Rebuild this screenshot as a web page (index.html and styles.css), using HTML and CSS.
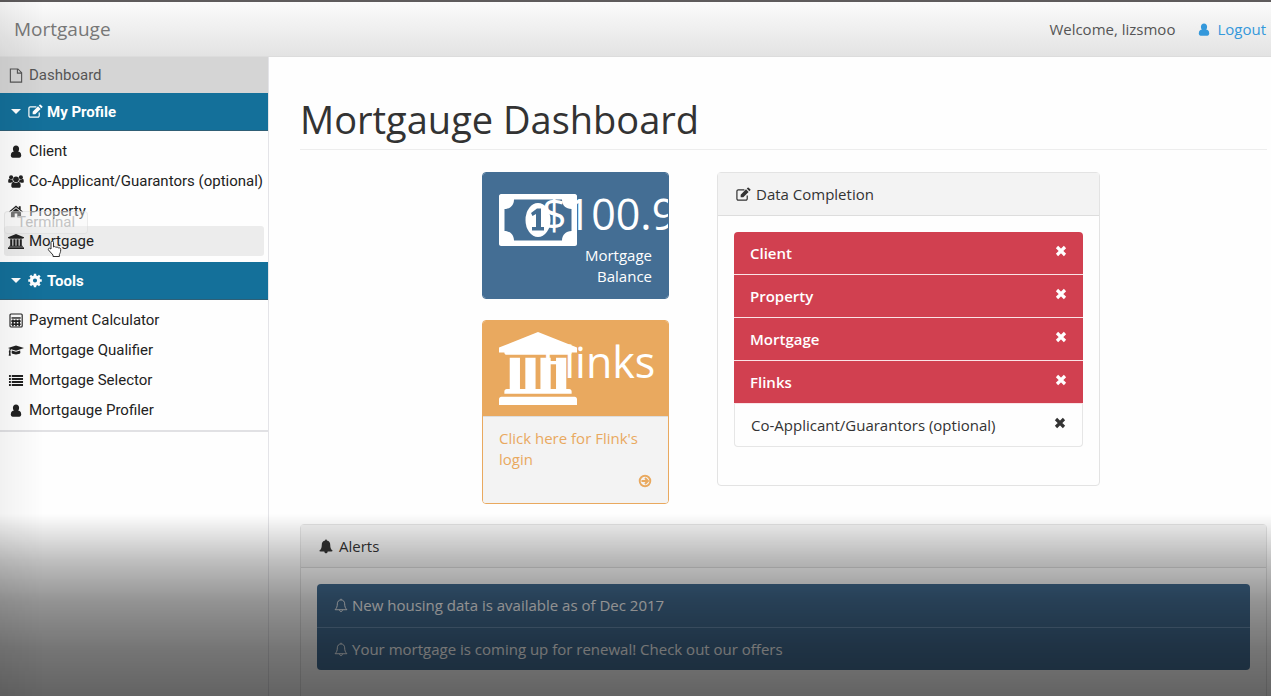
FILE: index.html
```html
<!DOCTYPE html>
<html lang="en">
<head>
<meta charset="UTF-8">
<meta name="viewport" content="width=device-width, initial-scale=1.0">
<title>Mortgauge</title>
<link rel="stylesheet" href="styles.css">
</head>
<body>

<!-- icon set -->
<svg class="icon-defs" aria-hidden="true">
    <symbol id="i-file" viewBox="0 0 16 16"><path d="M2 1h8l4 4v10H2zM9.500 1v4.500h4.500" fill="none" stroke="currentColor" stroke-width="1.200"/></symbol>
    <symbol id="i-edit" viewBox="0 0 16 16"><path d="M12.500 9v3.500a1.500 1.500 0 0 1-1.500 1.500H3a1.500 1.500 0 0 1-1.500-1.500v-8A1.500 1.500 0 0 1 3 3h6.500" fill="none" stroke="currentColor" stroke-width="1.300"/><path d="M5.500 8.200V11h2.800L14 5.300 11.200 2.500zM12 1.700l2.800 2.800 1-1c.4-.4.400-.7 0-1L14 .7c-.3-.4-.7-.4-1 0z" fill="currentColor"/></symbol>
    <symbol id="i-user" viewBox="0 0 16 16"><path d="M8 1.500c2 0 3.300 1.500 3.300 3.500 0 1.500-.5 2.700-1.300 3.400H6C5.200 7.700 4.700 6.500 4.700 5c0-2 1.300-3.500 3.300-3.500z" fill="currentColor"/><path d="M5.500 8C3.500 8.300 2.500 9.800 2.500 12c0 1.700.6 2.600 2 2.600h7c1.400 0 2-.9 2-2.600 0-2.200-1-3.700-3-4z" fill="currentColor"/></symbol>
    <symbol id="i-users" viewBox="0 0 18 16"><g fill="currentColor"><circle cx="9" cy="5.500" r="3.200"/><circle cx="3.500" cy="3.200" r="2.300"/><circle cx="14.500" cy="3.200" r="2.300"/><path d="M5.800 8.300C4.200 9 3.700 11 3.700 13c0 1.300.8 2 1.900 2h6.800c1.100 0 1.900-.7 1.900-2 0-2-.5-4-2.100-4.700-1.700 1.500-4.700 1.500-6.400 0zM.2 8.300c0-1.700.2-3 1.300-3.300 1 .9 2.500 1 3.500.500 0 1.200.2 2 .8 2.700-.9 0-1.700.4-2.200 1.200H1.500C.7 9.400.2 9 .2 8.300zM17.800 8.300c0-1.700-.2-3-1.300-3.300-1 .9-2.500 1-3.500.500 0 1.200-.2 2-.8 2.700.9 0 1.700.4 2.200 1.200h2.100c.8 0 1.300-.4 1.300-1.100z"/></g></symbol>
    <symbol id="i-home" viewBox="0 0 16 16"><g fill="currentColor"><path d="M8 1.700.6 8l.8.900L8 3.400l6.600 5.500.8-.9-2.400-2V2.300h-2v2z"/><path d="M8 4.500 2.600 9v5h4v-3.800h2.800V14h4V9z"/></g></symbol>
    <symbol id="i-bank" viewBox="0 0 16 15"><path d="M8 0l8 3.200v1h-1.100c0 .3-.2.500-.5.500H1.600c-.3 0-.5-.2-.5-.5H0v-1zM2.200 5.300h2.100v6.400h1.100V5.300h2.100v6.400h1V5.300h2.100v6.400h1.100V5.300h2.100v6.400h.6c.3 0 .5.200.5.500v.5H1.100v-.5c0-.3.200-.5.500-.5h.6zM.5 13.300h15c.3 0 .5.200.5.500V15H0v-1.200c0-.3.200-.5.500-.5z" fill="currentColor"/></symbol>
    <symbol id="i-cog" viewBox="0 0 16 16"><circle cx="8" cy="8" r="3.900" fill="none" stroke="currentColor" stroke-width="3.400"/><path d="M8 .8v3M8 12.200v3M.8 8h3M12.200 8h3M2.900 2.900 5 5M11 11l2.100 2.100M2.900 13.100 5 11M11 5l2.100-2.100" stroke="currentColor" stroke-width="2.600"/></symbol>
    <symbol id="i-calc" viewBox="0 0 16 16"><rect x="1.600" y="1.100" width="13" height="13.800" rx="1" fill="none" stroke="currentColor" stroke-width="1.200"/><path d="M3.200 5.300h9.800" stroke="currentColor" stroke-width="1.500"/><path d="M4.700 7v7M8 7v7M11.400 7v7" stroke="currentColor" stroke-width="1.700"/><path d="M3 8.700h10M3 12h10" stroke="currentColor" stroke-width="1.700"/></symbol>
    <symbol id="i-cap" viewBox="0 0 18 16"><path d="M9 2.500 18 5.300 9 8.200 3.500 6.500C2.900 7 2.700 7.800 2.600 8.700c.8.500.7 1.400.1 1.800l.5 3.500H.8l.5-3.500c-.6-.5-.6-1.300 0-1.800 0-1 .3-1.900.9-2.600L0 5.300zM4.300 8l4.700 1.500L13.700 8l.2 2.800c-1.700 2.200-8.100 2.200-9.800 0z" fill="currentColor"/></symbol>
    <symbol id="i-list" viewBox="0 0 16 16"><path d="M.5 3.200h2M3.500 3.200h12M.5 6.400h2M3.500 6.400h12M.5 9.600h2M3.500 9.600h12M.5 12.800h2M3.500 12.800h12" stroke="currentColor" stroke-width="2"/></symbol>
    <symbol id="i-bell" viewBox="0 0 16 16"><path d="M8 .6c.6 0 1 .4.9 1.100C11.400 2.200 12.500 4 12.500 6c0 3.500 1 5 2.500 6.200 0 .6-.5 1-1 1H9.800c0 1-.8 1.900-1.800 1.900s-1.800-.9-1.800-1.900H2c-.5 0-1-.4-1-1C2.500 11 3.500 9.500 3.500 6c0-2 1.100-3.800 3.600-4.300C7 1 7.400.6 8 .6z" fill="currentColor"/></symbol>
    <symbol id="i-bell-o" viewBox="0 0 16 16"><path d="M8 2c-2.600.2-3.900 2-3.900 4.200 0 3-.9 4.800-2.400 6.300h12.600c-1.500-1.500-2.400-3.300-2.400-6.300C11.900 4 10.600 2.200 8 2zM8 2V.8M6.500 12.600c0 2.600 3 2.600 3 0" fill="none" stroke="currentColor"/></symbol>
    <symbol id="i-times" viewBox="0 0 12 12"><path d="M2 2l8 8M10 2l-8 8" stroke="currentColor" stroke-width="3.200"/></symbol>
    <symbol id="i-arrow" viewBox="0 0 14 14"><circle cx="7" cy="7" r="5.300" fill="none" stroke="currentColor" stroke-width="1.900"/><path d="M3.500 7h6M7 4l3 3-3 3" fill="none" stroke="currentColor" stroke-width="1.900"/></symbol>
    <symbol id="i-money" viewBox="0 0 78 52"><path fill="currentColor" fill-rule="evenodd" d="M2 0h74c1 0 2 1 2 2v48c0 1-1 2-2 2H2c-1 0-2-1-2-2V2C0 1 1 0 2 0zM15 5.500c0 6-4 9.500-9.500 9.500v22c5.500 0 9.500 4 9.500 9.500h48c0-5.500 4-9.500 9.500-9.500V15C67 15 63 11.500 63 5.500z"/><ellipse cx="39" cy="26" rx="12.500" ry="17" fill="currentColor"/><path class="money-one" d="M33 33h12v3.500H33zM37 33V20l-3.500 2-1.500-3 6-4.500h4V33z"/></symbol>
</svg>

<header class="navbar">
    <a class="brand" href="#">Mortgauge</a>
    <div class="navbar-right">
        <span>Welcome, lizsmoo</span>
        <a class="logout" href="#"><svg class="icon"><use href="#i-user"/></svg>Logout</a>
    </div>
</header>

<div class="wrapper">
    <nav class="sidebar">
        <a class="dashboard" href="#"><svg class="icon"><use href="#i-file"/></svg>Dashboard</a>

        <button class="menu-toggle" type="button"><span class="caret"></span><svg class="icon"><use href="#i-edit"/></svg>My Profile</button>
        <ul class="menu">
            <li><a href="#"><svg class="icon"><use href="#i-user"/></svg>Client</a></li>
            <li><a href="#"><svg class="icon"><use href="#i-users"/></svg>Co-Applicant/Guarantors (optional)</a></li>
            <li><a href="#"><svg class="icon"><use href="#i-home"/></svg>Property</a></li>
            <li class="hovered">
                <a href="#"><svg class="icon"><use href="#i-bank"/></svg>Mortgage</a>
                <span class="dock-label">Terminal</span>
                <svg class="pointer" viewBox="0 0 16 18"><path d="M4 9V2.500C4 .7 6.500.7 6.500 2.500V7c1-.8 2-.5 2.400.4 1-.6 2-.3 2.300.6 1.400-.6 2.500.1 2.500 1.500 0 3-.7 3.500-1.300 5v2H6v-1.500L1.500 10C.7 8.700 2.200 7.700 3 8.500z" fill="#fff" stroke="#333"/></svg>
            </li>
        </ul>

        <button class="menu-toggle" type="button"><span class="caret"></span><svg class="icon"><use href="#i-cog"/></svg>Tools</button>
        <ul class="menu">
            <li><a href="#"><svg class="icon"><use href="#i-calc"/></svg>Payment Calculator</a></li>
            <li><a href="#"><svg class="icon"><use href="#i-cap"/></svg>Mortgage Qualifier</a></li>
            <li><a href="#"><svg class="icon"><use href="#i-list"/></svg>Mortgage Selector</a></li>
            <li><a href="#"><svg class="icon"><use href="#i-user"/></svg>Mortgauge Profiler</a></li>
        </ul>
    </nav>

    <main class="content">
        <h1>Mortgauge Dashboard</h1>

        <div class="row">
            <div class="tiles">
                <section class="tile tile-blue">
                    <div class="tile-heading">
                        <svg class="tile-icon money"><use href="#i-money"/></svg>
                        <div class="tile-text">
                            <div class="huge">$100.9</div>
                            <div>Mortgage Balance</div>
                        </div>
                    </div>
                </section>
                <section class="tile tile-orange">
                    <div class="tile-heading">
                        <svg class="tile-icon bank"><use href="#i-bank"/></svg>
                        <div class="tile-text">
                            <div class="huge">Flinks</div>
                        </div>
                    </div>
                    <a class="tile-footer" href="#">
                        <span>Click here for Flink's login</span>
                        <svg class="arrow"><use href="#i-arrow"/></svg>
                    </a>
                </section>
            </div>

            <section class="panel completion">
                <h2 class="panel-heading"><svg class="icon"><use href="#i-edit"/></svg>Data Completion</h2>
                <div class="panel-body">
                    <ul class="list">
                        <li class="danger">Client<svg class="times"><use href="#i-times"/></svg></li>
                        <li class="danger">Property<svg class="times"><use href="#i-times"/></svg></li>
                        <li class="danger">Mortgage<svg class="times"><use href="#i-times"/></svg></li>
                        <li class="danger">Flinks<svg class="times"><use href="#i-times"/></svg></li>
                        <li>Co-Applicant/Guarantors (optional)<svg class="times"><use href="#i-times"/></svg></li>
                    </ul>
                </div>
            </section>
        </div>

        <section class="panel alerts">
            <h2 class="panel-heading"><svg class="icon"><use href="#i-bell"/></svg>Alerts</h2>
            <div class="panel-body">
                <ul class="list">
                    <li class="info"><svg class="icon"><use href="#i-bell-o"/></svg>New housing data is available as of Dec 2017</li>
                    <li class="info"><svg class="icon"><use href="#i-bell-o"/></svg>Your mortgage is coming up for renewal! Check out our offers</li>
                </ul>
            </div>
        </section>
    </main>
</div>

<div class="shade-left"></div>
<div class="shade-bottom"></div>

</body>
</html>
```
FILE: styles.css
```css
* {
    box-sizing: border-box;
}
body {
    margin: 0;
    height: 100vh;
    display: flex;
    flex-direction: column;
    overflow: hidden;
    background: #fefefe;
    color: #333;
    font-family: "Open Sans", sans-serif;
    font-size: 15px;
    line-height: 21px;
}
a {
    color: inherit;
    text-decoration: none;
}
ul {
    list-style: none;
    margin: 0;
    padding: 0;
}
.icon-defs {
    display: none;
}
.icon {
    width: 16px;
    height: 15px;
    flex: none;
}

/* top bar */
.navbar {
    flex: none;
    display: flex;
    justify-content: space-between;
    align-items: center;
    height: 57px;
    padding: 0 5px 0 14px;
    border-top: 2px solid #5e5b5c;
    border-bottom: 1px solid #dcdcdc;
    background: linear-gradient(#fbfbfb, #e3e3e3);
}
.brand {
    color: #777;
    font-size: 19px;
}
.navbar-right {
    display: flex;
    gap: 21px;
    color: #555;
}
.logout {
    display: flex;
    align-items: center;
    gap: 5px;
    color: #3498db;
}

/* sidebar */
.wrapper {
    flex: 1;
    display: flex;
    min-height: 0;
}
.sidebar {
    flex: none;
    width: 269px;
    border-right: 1px solid #e4e4e8;
    font-family: Roboto, sans-serif;
}
.dashboard {
    display: flex;
    align-items: center;
    gap: 5px;
    height: 36px;
    padding-left: 8px;
    background: #d5d5d5;
    color: #555;
}
.menu-toggle {
    display: flex;
    align-items: center;
    gap: 4px;
    width: 100%;
    height: 38px;
    padding: 0 0 0 11px;
    border: 0;
    border-bottom: 1px solid #2f5f76;
    background: #14709a;
    color: #fff;
    font: bold 15px Roboto, sans-serif;
}
.caret {
    margin-right: 2px;
    border: 5px solid transparent;
    border-top-color: #fff;
    border-bottom: 0;
}
.menu {
    padding: 5px 4px;
    border-bottom: 2px solid #e1e1e4;
}
.menu:not(:last-child) {
    padding-bottom: 6px;
    border-bottom: 0;
}
.menu li {
    position: relative;
    height: 30px;
    padding: 0 4px;
    border-radius: 3px;
    color: #222;
}
.menu a {
    display: flex;
    align-items: center;
    gap: 5px;
    height: 30px;
    white-space: nowrap;
}
.menu .hovered {
    background: #ececec;
}
.dock-label {
    position: absolute;
    left: 0;
    top: -15px;
    padding: 0 12px;
    border: 1px solid rgba(200, 200, 200, .3);
    border-radius: 4px;
    background: rgba(245, 245, 245, .4);
    color: #c4c4c4;
}
.pointer {
    position: absolute;
    left: 43px;
    top: 14px;
    width: 16px;
    height: 18px;
}

/* content */
.content {
    flex: 1;
    min-width: 0;
    padding: 38px 4px 0 31px;
}
h1 {
    margin: 0 0 22px;
    padding-bottom: 5px;
    border-bottom: 1px solid #ededed;
    font-size: 38px;
    line-height: 49px;
    font-weight: normal;
}
.row {
    display: grid;
    grid-template-columns: 182fr 187fr 48fr 383fr 167fr;
    align-items: start;
    margin-bottom: 20px;
}
.tiles {
    grid-column: 2;
    display: grid;
    gap: 21px;
    min-width: 0;
}
.tile {
    border: 1px solid;
    border-radius: 4px;
    overflow: hidden;
}
.tile-blue {
    border-color: #446e94;
}
.tile-orange {
    border-color: #e9a95f;
}
.tile-heading {
    display: flex;
    padding: 10px 16px;
    color: #fff;
}
.tile-blue .tile-heading {
    min-height: 125px;
    background: #446e94;
}
.tile-orange .tile-heading {
    min-height: 95px;
    background: #e9a95f;
}
.tile-icon {
    flex: none;
    width: 78px;
    margin-right: -35px;
}
.money {
    height: 52px;
    margin-top: 11px;
}
.money-one {
    fill: #446e94;
}
.bank {
    height: 75px;
}
.tile-text {
    flex: 1;
    min-width: 0;
    text-align: right;
}
.huge {
    font-size: 43px;
    line-height: 62px;
    white-space: nowrap;
}
.tile-footer {
    display: block;
    padding: 11px 16px;
    background: #f3f3f3;
    border-top: 1px solid #ddd;
    color: #e9a95f;
}
.arrow {
    display: block;
    width: 14px;
    height: 14px;
    margin: 4px 0 4px auto;
}

/* panels */
.panel {
    border: 1px solid #e3e3e3;
    border-radius: 4px;
}
.completion {
    grid-column: 4;
}
.panel-heading {
    display: flex;
    align-items: center;
    gap: 5px;
    height: 43px;
    margin: 0;
    padding: 0 17px;
    border-bottom: 1px solid #ddd;
    background: #f3f3f3;
    font-size: 15px;
    font-weight: normal;
}
.panel-body {
    padding: 16px 16px 38px;
}
.list li {
    display: flex;
    height: 43px;
    padding: 11px 16px;
    border: 1px solid #e6e6e6;
    border-top: 0;
}
.list li:first-child {
    border-radius: 4px 4px 0 0;
}
.list li:last-child {
    border-radius: 0 0 4px 4px;
}
.list .danger {
    border: 0;
    border-bottom: 1px solid #fbe3e6;
    background: #d14050;
    color: #fff;
    font-weight: 600;
}
.times {
    width: 12px;
    height: 12px;
    margin-left: auto;
    margin-top: 2px;
}
.list .info {
    align-items: center;
    gap: 3px;
    border: 0;
    background: #446e94;
    color: #fff;
}
.list .info + .info {
    border-top: 1px solid #6d93b5;
}

/* fades over the window edges */
.shade-left,
.shade-bottom {
    position: fixed;
    left: 0;
    bottom: 0;
    pointer-events: none;
}
.shade-left {
    top: 0;
    width: 44px;
    background: linear-gradient(to right, rgba(0, 0, 0, .05), transparent);
}
.shade-bottom {
    right: 0;
    height: 182px;
    background: linear-gradient(transparent, rgba(0, 0, 0, .25) 26%, rgba(0, 0, 0, .42) 48%, rgba(0, 0, 0, .54) 74%, rgba(0, 0, 0, .61));
}
```
